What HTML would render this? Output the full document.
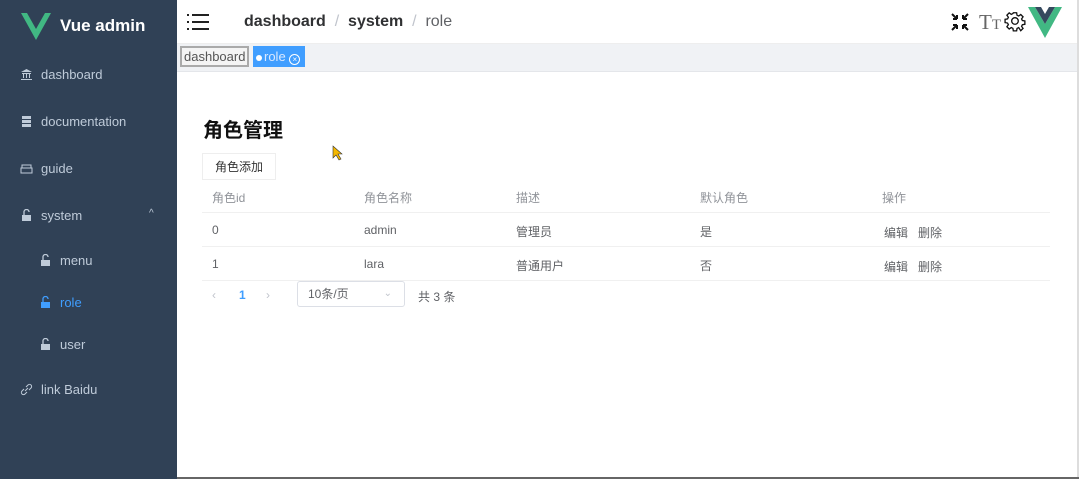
<!DOCTYPE html>
<html><head><meta charset="utf-8"><style>
*{margin:0;padding:0;box-sizing:border-box}
body{width:1079px;height:479px;overflow:hidden;background:#fff;font-family:"Liberation Sans","Noto Sans CJK SC",sans-serif;position:relative}
.side{position:absolute;left:0;top:0;width:177px;height:479px;background:#304156;color:#bfcbd9;font-size:13px}
.logo{height:52px;display:flex;align-items:center;padding-left:21px;color:#fff;font-weight:bold;font-size:17px}
.item{position:absolute;left:20px;display:flex;align-items:center;gap:8px}
.item svg{width:13px;height:13px}
.hdr{position:absolute;left:177px;top:0;right:0;height:44px;border-bottom:1px solid #eee}
.tags{position:absolute;left:177px;top:44px;right:0;height:28px;background:#f0f2f5;border-bottom:1px solid #e4e6ea}
.abs{position:absolute}
.th{color:#909399;font-size:12px}
.td{color:#606266;font-size:12px}
.line{position:absolute;left:202px;width:848px;height:1px;background:#f0f0f0}
</style></head><body>
<div class="side">
 <div class="logo"><svg width="30" height="27" viewBox="0 0 30 27" style="margin-right:9px"><path d="M0 0h6l9 16 9-16h6L15 27z" fill="#41b883"/></svg>Vue admin</div>
 <div class="item" style="top:67px"><svg viewBox="0 0 13 13"><path d="M6.5 1L1 4h11zM2 5h9v1H2zM3 6h1v4H3zM6 6h1v4H6zM9 6h1v4H9zM1 11h11v1H1z" fill="#bfcbd9"/></svg>dashboard</div>
 <div class="item" style="top:114px"><svg viewBox="0 0 13 13"><path d="M2 1h9v3H2zM2 5h9v3H2zM2 9h9v3H2z" fill="#bfcbd9"/></svg>documentation</div>
 <div class="item" style="top:161px"><svg viewBox="0 0 13 13"><path d="M2 3h9v3H2zM1 6h11v5H1z" fill="none" stroke="#bfcbd9"/></svg>guide</div>
 <div class="item" style="top:208px"><svg viewBox="0 0 13 13"><path d="M2 6h9v6H2z" fill="#bfcbd9"/><path d="M4 6V3a2.5 2.5 0 0 1 5 0" fill="none" stroke="#bfcbd9" stroke-width="1.3"/></svg>system</div>
 <div class="abs" style="left:149px;top:208px;font-size:10px">^</div>
 <div class="item" style="top:253px;left:39px"><svg viewBox="0 0 13 13"><path d="M2 6h9v6H2z" fill="#bfcbd9"/><path d="M4 6V3a2.5 2.5 0 0 1 5 0" fill="none" stroke="#bfcbd9" stroke-width="1.3"/></svg>menu</div>
 <div class="item" style="top:295px;left:39px;color:#409eff"><svg viewBox="0 0 13 13"><path d="M2 6h9v6H2z" fill="#409eff"/><path d="M4 6V3a2.5 2.5 0 0 1 5 0" fill="none" stroke="#409eff" stroke-width="1.3"/></svg>role</div>
 <div class="item" style="top:337px;left:39px"><svg viewBox="0 0 13 13"><path d="M2 6h9v6H2z" fill="#bfcbd9"/><path d="M4 6V3a2.5 2.5 0 0 1 5 0" fill="none" stroke="#bfcbd9" stroke-width="1.3"/></svg>user</div>
 <div class="item" style="top:382px"><svg viewBox="0 0 13 13"><path d="M5 8l3-3M4 6L2 8a2 2 0 0 0 3 3l2-2M9 7l2-2a2 2 0 0 0-3-3L6 4" fill="none" stroke="#bfcbd9"/></svg>link Baidu</div>
</div>
<div class="hdr">
 <svg class="abs" style="left:10px;top:14px" width="22" height="16" viewBox="0 0 22 16"><path d="M0 1h2M5 1h17M0 8h2M5 8h17M0 15h2M5 15h17" stroke="#222" stroke-width="2"/></svg>
 <div class="abs" style="left:67px;top:13px;font-size:16px;color:#303133"><b>dashboard</b> <span style="color:#c0c4cc">&nbsp;/&nbsp;</span> <b>system</b> <span style="color:#c0c4cc">&nbsp;/&nbsp;</span> <span style="color:#606266">role</span></div>
 <svg class="abs" style="left:774px;top:13px" width="18" height="18" viewBox="0 0 18 18"><path d="M1 1l5 5M6 6h-4M6 6v-4M17 1l-5 5M12 6h4M12 6v-4M1 17l5-5M6 12h-4M6 12v4M17 17l-5-5M12 12h4M12 12v4" stroke="#111" stroke-width="2"/></svg>
 <div class="abs" style="left:802px;top:10px;font-family:'Liberation Serif',serif;font-size:21px;color:#666">T<span style="font-size:15px">T</span></div>
 <svg class="abs" style="left:827px;top:10px" width="22" height="22" viewBox="0 0 24 24"><path d="M12 8a4 4 0 1 0 0 8 4 4 0 0 0 0-8z M10 2h4l.5 3 2 1 2.5-1.8 2.8 2.8L20 9.5l1 2 3 .5v4l-3 .5-1 2 1.8 2.5-2.8 2.8L16.5 20l-2 1-.5 3h-4l-.5-3-2-1L5 21.8 2.2 19 4 16.5l-1-2-3-.5v-4l3-.5 1-2L2.2 5 5 2.2 7.5 4l2-1z" fill="none" stroke="#111" stroke-width="1.6" transform="scale(.9) translate(1.3 1.3)"/></svg>
 <svg class="abs" style="left:851px;top:7px" width="34" height="31" viewBox="0 0 34 31"><path d="M0 0h7l10 17 10-17h7L17 31z" fill="#41b883"/><path d="M7 0h6l4 7 4-7h6L17 17z" fill="#35495e"/></svg>
</div>
<div class="tags">
 <div class="abs" style="left:3px;top:2px;height:21px;border:2px solid #aaa;background:#f4f4f4;font-size:13px;color:#555;padding:0 2px;line-height:17px">dashboard</div>
 <div class="abs" style="left:76px;top:2px;height:21px;width:52px;background:#409eff;font-size:13px;color:#dbe9ff;line-height:21px;padding-left:3px"><span style="display:inline-block;width:6px;height:6px;border-radius:50%;background:#fff;margin-right:2px"></span>role <span style="display:inline-block;width:11px;height:11px;border:1px solid #fff;border-radius:50%;font-size:8px;line-height:9px;text-align:center;color:#fff;vertical-align:-1px">×</span></div>
</div>
<div class="abs" style="left:203px;top:114px;font-size:20px;font-weight:bold;color:#111">角色管理</div>
<svg class="abs" style="left:332px;top:145px" width="12" height="16" viewBox="0 0 12 16"><path d="M1 1v12l3-3 3 5 2-1-3-5h4z" fill="#f5b800" stroke="#333" stroke-width=".6"/></svg>
<div class="abs" style="left:202px;top:153px;width:74px;height:27px;border:1px solid #eee;font-size:12px;color:#333;text-align:center;line-height:26px">角色添加</div>
<div class="abs th" style="left:212px;top:189px">角色id</div>
<div class="abs th" style="left:364px;top:189px">角色名称</div>
<div class="abs th" style="left:516px;top:189px">描述</div>
<div class="abs th" style="left:700px;top:189px">默认角色</div>
<div class="abs th" style="left:882px;top:189px">操作</div>
<div class="line" style="top:212px"></div>
<div class="abs td" style="left:212px;top:223px">0</div>
<div class="abs td" style="left:364px;top:223px">admin</div>
<div class="abs td" style="left:516px;top:223px">管理员</div>
<div class="abs td" style="left:700px;top:223px">是</div>
<div class="abs td" style="left:884px;top:224px">编辑 &nbsp;&nbsp;删除</div>
<div class="line" style="top:246px"></div>
<div class="abs td" style="left:212px;top:257px">1</div>
<div class="abs td" style="left:364px;top:257px">lara</div>
<div class="abs td" style="left:516px;top:257px">普通用户</div>
<div class="abs td" style="left:700px;top:257px">否</div>
<div class="abs td" style="left:884px;top:258px">编辑 &nbsp;&nbsp;删除</div>
<div class="line" style="top:280px"></div>
<div class="abs" style="left:212px;top:288px;font-size:12px;color:#c0c4cc">‹</div>
<div class="abs" style="left:239px;top:288px;font-size:12px;color:#409eff;font-weight:bold">1</div>
<div class="abs" style="left:266px;top:288px;font-size:12px;color:#c0c4cc">›</div>
<div class="abs" style="left:297px;top:281px;width:108px;height:26px;border:1px solid #dcdfe6;border-radius:3px;font-size:12px;color:#606266;line-height:24px;padding-left:10px">10条/页<span style="position:absolute;right:12px;color:#c0c4cc;font-size:10px">⌄</span></div>
<div class="abs" style="left:418px;top:288px;font-size:12px;color:#606266">共 3 条</div>
<div class="abs" style="left:1077px;top:0;width:2px;height:479px;background:#ddd"></div>
<div class="abs" style="left:177px;top:477px;width:902px;height:2px;background:#666"></div>
</body></html>
